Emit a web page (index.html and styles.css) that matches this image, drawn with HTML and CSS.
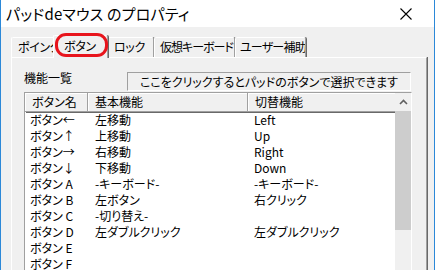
FILE: index.html
```html
<!DOCTYPE html>
<html lang="ja">
<head>
<meta charset="utf-8">
<link rel="stylesheet" href="styles.css">
</head>
<body>
<div class="window">
  <div class="titlebar">
    <span class="title">パッドdeマウス のプロパティ</span>
    <svg class="close" width="12" height="12" viewBox="0 0 12 12"><path d="M0.5 0.5 L11.5 11.5 M11.5 0.5 L0.5 11.5" stroke="#000" stroke-width="1.1" fill="none"/></svg>
  </div>
  <div class="content">
    <div class="tabs">
      <div class="tab t1">ポインタ</div>
      <div class="tab sel">ボタン</div>
      <div class="tab t3">ロック</div>
      <div class="tab t4">仮想キーボード</div>
      <div class="tab t5">ユーザー補助</div>
    </div>
    <div class="mark"></div>
    <div class="panel">
      <div class="toprow">
        <div class="label">機能一覧</div>
        <div class="hint">ここをクリックするとパッドのボタンで選択できます</div>
      </div>
      <div class="list">
        <div class="table">
          <div class="head">
            <div class="hc c1">ボタン名</div>
            <div class="hc c2">基本機能</div>
            <div class="hc c3">切替機能</div>
          </div>
          <div class="rows">
            <div class="row"><span class="d1">ボタン←</span><span class="d2">左移動</span><span class="d3">Left</span></div>
            <div class="row"><span class="d1">ボタン↑</span><span class="d2">上移動</span><span class="d3">Up</span></div>
            <div class="row"><span class="d1">ボタン→</span><span class="d2">右移動</span><span class="d3">Right</span></div>
            <div class="row"><span class="d1">ボタン↓</span><span class="d2">下移動</span><span class="d3">Down</span></div>
            <div class="row"><span class="d1">ボタン A</span><span class="d2">-キーボード-</span><span class="d3">-キーボード-</span></div>
            <div class="row"><span class="d1">ボタン B</span><span class="d2">左ボタン</span><span class="d3">右クリック</span></div>
            <div class="row"><span class="d1">ボタン C</span><span class="d2">-切り替え-</span><span class="d3"></span></div>
            <div class="row"><span class="d1">ボタン D</span><span class="d2">左ダブルクリック</span><span class="d3">左ダブルクリック</span></div>
            <div class="row"><span class="d1">ボタン E</span><span class="d2"></span><span class="d3"></span></div>
            <div class="row"><span class="d1">ボタン F</span><span class="d2"></span><span class="d3"></span></div>
          </div>
        </div>
        <div class="scroll">
          <div class="arrow"><svg width="9" height="6" viewBox="0 0 9 6"><path d="M1 5 L4.5 1.5 L8 5" stroke="#606060" stroke-width="1.6" fill="none"/></svg></div>
          <div class="thumb"></div>
          <div class="track"></div>
        </div>
      </div>
    </div>
  </div>
</div>
</body>
</html>
```
FILE: styles.css
```css
html, body {
  margin: 0;
  padding: 0;
}
body {
  width: 435px;
  height: 270px;
  overflow: hidden;
  background: #f0f0f0;
  font-family: "Noto Sans CJK JP", "Noto Sans", sans-serif;
  font-size: 12px;
  color: #000;
  font-feature-settings: "palt";
}
.window {
  width: 433px;
  height: 270px;
  border-left: 1px solid #2b88d8;
  border-right: 1px solid #2b88d8;
  background: #f0f0f0;
  position: relative;
}
.titlebar {
  height: 27px;
  background: #fff;
  display: flex;
  align-items: center;
  justify-content: space-between;
  padding: 0 22px 0 5px;
}
.title {
  font-size: 15px;
  line-height: 20px;
  letter-spacing: 0.2px;
}
.close {
  display: block;
}
.content {
  padding: 8px 7px 0 10px;
}
.tabs {
  height: 22px;
  display: flex;
  align-items: flex-end;
}
.tab {
  box-sizing: border-box;
  height: 20px;
  line-height: 18px;
  padding-left: 6px;
  border-top: 1px solid #fff;
  border-left: 1px solid #fff;
  border-right: 1px solid #a0a0a0;
  box-shadow: 1px 0 0 #696969;
  border-radius: 2px 2px 0 0;
  white-space: nowrap;
  background: #f0f0f0;
  letter-spacing: -0.3px;
  overflow: hidden;
}
.t1 { width: 44px; }
.sel {
  width: 55px;
  height: 23px;
  margin: 0 -1px -1px -2px;
  padding-left: 10px;
  line-height: 20px;
  position: relative;
  z-index: 2;
}
.t3 { width: 47px; }
.t4 { width: 81px; padding-left: 5px; letter-spacing: -1px; }
.t5 { width: 71px; padding-left: 4px; letter-spacing: -0.8px; }
.mark {
  position: absolute;
  left: 54px;
  top: 33px;
  width: 53px;
  height: 24px;
  box-sizing: border-box;
  border: 3px solid #e8141c;
  border-radius: 11px;
  z-index: 5;
}
.panel {
  box-sizing: border-box;
  height: 230px;
  border-top: 1px solid #fff;
  border-left: 1px solid #fff;
  border-right: 1px solid #a0a0a0;
  box-shadow: 1px 0 0 #696969;
  padding: 14px 14px 0 12px;
}
.toprow {
  display: flex;
  align-items: flex-start;
  margin-bottom: 1px;
}
.label {
  width: 103px;
  line-height: 14px;
  margin-top: -1px;
}
.hint {
  flex: 1;
  box-sizing: border-box;
  height: 19px;
  line-height: 17px;
  text-align: center;
  border-top: 1px solid #a0a0a0;
  border-left: 1px solid #a0a0a0;
  border-right: 1px solid #fff;
  border-bottom: 1px solid #fff;
  margin-right: 1px;
}
.list {
  display: flex;
  height: 200px;
  border-top: 1px solid #a0a0a0;
  border-left: 1px solid #a0a0a0;
  border-right: 1px solid #fff;
  background: #fff;
}
.table {
  flex: 1;
}
.head {
  display: grid;
  grid-template-columns: 63px 160px 1fr;
  height: 19px;
}
.hc {
  box-sizing: border-box;
  background: #f0f0f0;
  line-height: 17px;
  padding-left: 7px;
  border-right: 1px solid #a0a0a0;
  border-bottom: 1px solid #a0a0a0;
  box-shadow: inset 1px 1px 0 #fff, 1px 1px 0 #696969;
}
.c3 {
  border-right: none;
}
.row {
  display: grid;
  grid-template-columns: 63px 160px 1fr;
  height: 16px;
  line-height: 16px;
}
.d1 { padding-left: 5px; }
.d2 { padding-left: 7px; }
.d3 { padding-left: 6px; }
.scroll {
  width: 16px;
  display: flex;
  flex-direction: column;
  background: #f0f0f0;
}
.arrow {
  height: 18px;
  display: flex;
  align-items: center;
  justify-content: center;
}
.thumb {
  height: 119px;
  background: #cdcdcd;
}
.track {
  flex: 1;
}
```
